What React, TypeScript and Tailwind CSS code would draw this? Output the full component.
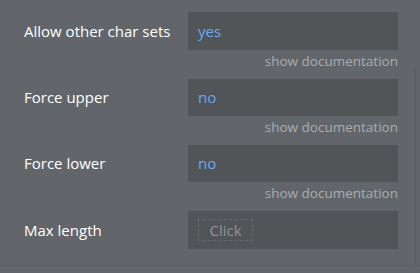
import React from "react";

const font = { fontFamily: '"Open Sans", "Noto Sans", sans-serif' };

function Row({ label, value, last, tall }: { label: string; value: React.ReactNode; last?: boolean; tall?: boolean }) {
  return (
    <div className="flex flex-col">
      <div className="flex items-center">
        <div className="w-[164px] text-[15px] text-white">{label}</div>
        <div className={`w-[210px] ${tall ? "h-[38px]" : "h-[37px]"} bg-[#515558] flex items-center pl-[10px]`}>{value}</div>
      </div>
      {!last && (
        <div className="w-[374px] h-[29px] flex justify-end">
          <span className="text-[13.5px] leading-[22px] text-[#a9acae]">show documentation</span>
        </div>
      )}
    </div>
  );
}

export default function App() {
  return (
    <div className="w-[420px] h-[273px] bg-[#62666a] overflow-hidden flex flex-col" style={font}>
      <div className="flex h-[266px] border-b border-[#585c5f]">
        <div className="flex-1 pl-[24px] pt-[12px]">
          <Row label="Allow other char sets" tall value={<span className="text-[15px] text-[#6aa8f2]">yes</span>} />
          <Row label="Force upper" value={<span className="text-[15px] text-[#6aa8f2]">no</span>} />
          <Row label="Force lower" value={<span className="text-[15px] text-[#6aa8f2]">no</span>} />
          <Row
            label="Max length"
            last
            tall
            value={
              <span className="h-[22px] w-[55px] border border-dashed border-[#65696c] flex items-center justify-center text-[15px] text-[#8f9396]">
                Click
              </span>
            }
          />
        </div>
        <div className="w-[5px] flex flex-col">
          <div className="h-[67px]" />
          <div className="flex-1 border-l border-[#585c5f]" />
        </div>
      </div>
    </div>
  );
}
